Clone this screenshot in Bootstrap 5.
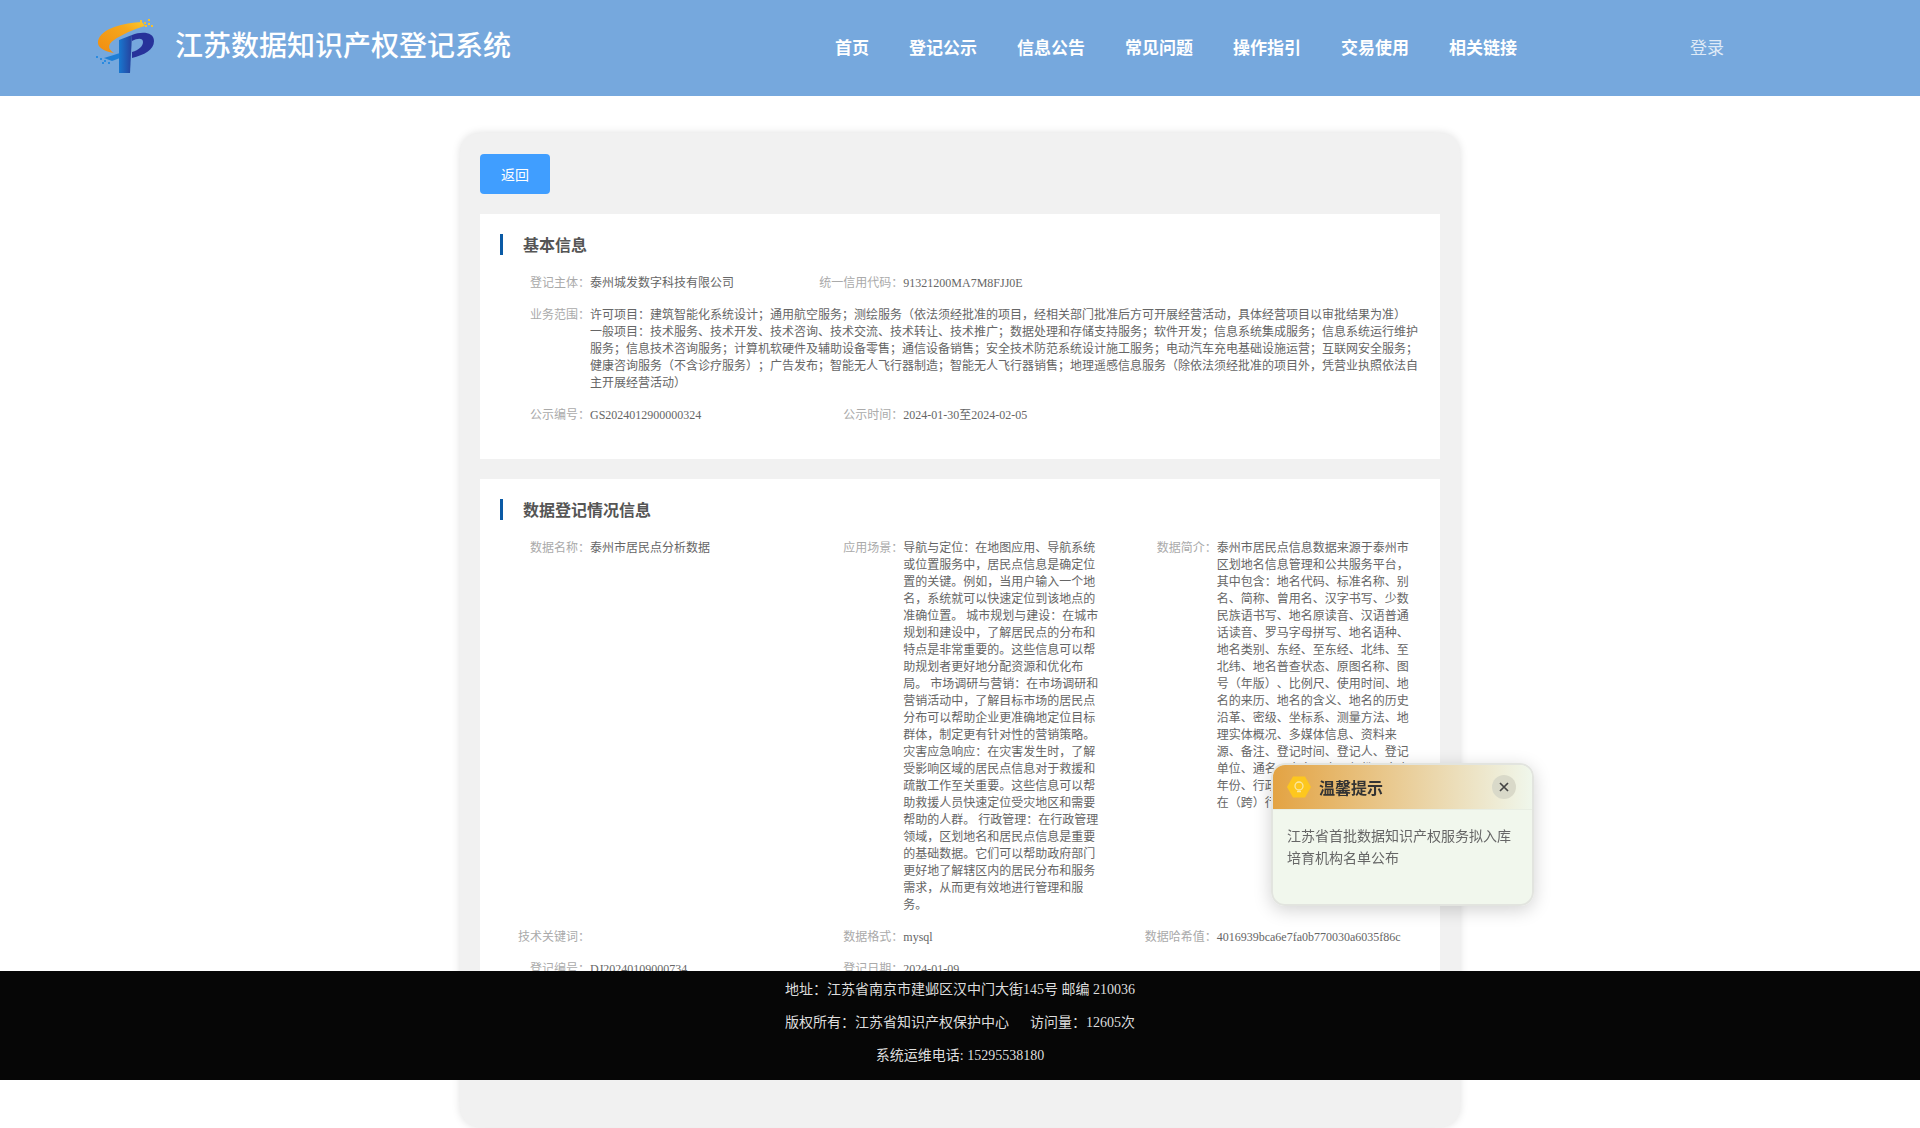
<!DOCTYPE html>
<html lang="zh-CN">
<head>
  <meta charset="UTF-8">
  <title>江苏数据知识产权登记系统</title>
  <link href="https://cdn.jsdelivr.net/npm/bootstrap@5.3.3/dist/css/bootstrap.min.css" rel="stylesheet">
  <style>
    html, body { height: 100%; overflow: hidden; }
    body { background: #fff; font-family: "Liberation Serif", "Noto Sans CJK JP", serif; font-size: 12px; line-height: 17px; color: #666; text-spacing-trim: space-all; }
    .top-bar { height: 96px; background: #76a8dd; color: #fff; font-family: "Noto Sans CJK SC", sans-serif; }
    .brand-box { width: 745px; margin-left: 90px; }
    .brand-logo { margin-bottom: 8px; }
    .brand-title { font-size: 28px; line-height: 40px; font-weight: 500; margin: 0 0 8px 9px; }
    .main-nav { gap: 40px; font-size: 17px; font-weight: 700; padding-bottom: 4px; }
    .main-nav a { color: #fff; text-decoration: none; }
    .login-link { margin-right: 196px; padding-bottom: 4px; font-size: 17px; color: #dfeaf7; text-decoration: none; }
    .detail-sheet { width: 1000px; height: 994px; margin: 37px auto 0; padding: 21px 20px; background: #f1f1f1; border-radius: 20px; box-shadow: 0 0 8px rgba(0,0,0,.13); overflow: hidden; }
    .back-btn { width: 70px; height: 40px; padding: 0; background: #409eff; border: 0; border-radius: 4px; color: #fff; font-size: 14px; margin-bottom: 20px; font-family: "Noto Sans CJK SC", sans-serif; }
    .info-panel { background: #fff; padding: 20px 20px 5px 0; margin-bottom: 20px; }
    .info-panel .kv-row:last-child { margin-bottom: 15px; padding-bottom: 15px; }
    .panel-head { margin: 0 0 20px 20px; padding-left: 20px; border-left: 3px solid #0a5aa5; font-size: 16px; line-height: 21px; font-weight: 700; color: #555; font-family: "Noto Sans CJK SC", sans-serif; }
    .kv-row { margin-bottom: 15px; }
    .kv-label { width: 110px; flex-shrink: 0; text-align: right; color: #aaa; }
    .kv-text { min-width: 0; word-break: break-all; }
    .data-col .kv-text { padding-right: 4px; }
    .site-foot { position: fixed; left: 0; right: 0; bottom: 48px; height: 109px; background: #060606; color: #ddd; font-size: 14px; line-height: 33px; padding-top: 2px; text-align: center; }
    .tip-box { position: fixed; left: 1271px; top: 763px; width: 263px; height: 143px; border: 2px solid #e2e4df; border-radius: 14px; background: rgba(240,247,236,.96); box-shadow: 0 4px 18px rgba(0,0,0,.18); overflow: hidden; font-family: "Noto Sans CJK SC", sans-serif; }
    .tip-head { height: 45px; padding: 0 16px 0 14px; background: linear-gradient(90deg, rgba(227,160,60,.96), rgba(240,247,236,.96)); border-bottom: 1px solid #e8eee3; }
    .tip-title { margin-left: 8px; font-size: 16px; font-weight: 700; color: #333; }
    .tip-close { width: 24px; height: 24px; margin-left: auto; padding: 0; border: 0; border-radius: 50%; background: #d9d9c9; }
    .tip-body { padding: 14px 14px; font-size: 14px; line-height: 22px; color: #666; }
  </style>
</head>
<body>
  <header class="top-bar d-flex align-items-center">
    <div class="brand-box d-flex align-items-center">
      <svg width="76" height="60" viewBox="0 0 76 60" class="brand-logo flex-shrink-0">
        <defs>
          <linearGradient id="swoosh" x1="0" y1="1" x2="1" y2="0">
            <stop offset="0" stop-color="#f08c10"/>
            <stop offset=".7" stop-color="#f6a81c"/>
            <stop offset="1" stop-color="#fbc92c"/>
          </linearGradient>
          <linearGradient id="stem" x1="0" y1="0" x2="1" y2="0">
            <stop offset="0" stop-color="#1878d0"/>
            <stop offset="1" stop-color="#27409c"/>
          </linearGradient>
        </defs>
        <path d="M52 8C34 9 11 14 8 27C7 33 13 37 24 39C18 35 17 31 24 26C31 21 44 15 55 12Z" fill="url(#swoosh)"/>
        <path d="M14 44L30 39L30 44L22 47Z" fill="#1f7fd6"/>
        <path d="M29 26L42 21L40 59L29 59Z" fill="url(#stem)"/>
        <path d="M42 21C52 17 64 18 64 27C64 36 54 41 42 44L42 38C49 36 53 32 53 28C53 24 48 24 42 27Z" fill="#27329a"/>
        <g fill="#f5c030">
          <rect x="50" y="6" width="2" height="2"/><rect x="54" y="8" width="2" height="2"/><rect x="58" y="9" width="2" height="2"/><rect x="55" y="11" width="2" height="2"/><rect x="61" y="11" width="2" height="2"/><rect x="58" y="5" width="2" height="2"/>
        </g>
        <g fill="#2b8be0">
          <rect x="6" y="42" width="2" height="2"/><rect x="10" y="44" width="2" height="2"/><rect x="14" y="46" width="2" height="2"/><rect x="18" y="48" width="2" height="2"/><rect x="12" y="48" width="2" height="2"/>
        </g>
      </svg>
      <div class="brand-title text-nowrap">江苏数据知识产权登记系统</div>
    </div>
    <nav class="main-nav d-flex">
      <a href="#">首页</a>
      <a href="#">登记公示</a>
      <a href="#">信息公告</a>
      <a href="#">常见问题</a>
      <a href="#">操作指引</a>
      <a href="#">交易使用</a>
      <a href="#">相关链接</a>
    </nav>
    <a href="#" class="login-link ms-auto">登录</a>
  </header>

  <main class="detail-sheet">
    <button type="button" class="btn back-btn d-block">返回</button>

    <section class="info-panel">
      <h2 class="panel-head">基本信息</h2>
      <div class="row g-0 kv-row">
        <div class="col-4 d-flex"><div class="kv-label">登记主体：</div><div class="kv-text">泰州城发数字科技有限公司</div></div>
        <div class="col-4 d-flex"><div class="kv-label">统一信用代码：</div><div class="kv-text">91321200MA7M8FJJ0E</div></div>
      </div>
      <div class="d-flex kv-row">
        <div class="kv-label">业务范围：</div>
        <div class="kv-text">许可项目：建筑智能化系统设计；通用航空服务；测绘服务（依法须经批准的项目，经相关部门批准后方可开展经营活动，具体经营项目以审批结果为准）<br>一般项目：技术服务、技术开发、技术咨询、技术交流、技术转让、技术推广；数据处理和存储支持服务；软件开发；信息系统集成服务；信息系统运行维护服务；信息技术咨询服务；计算机软硬件及辅助设备零售；通信设备销售；安全技术防范系统设计施工服务；电动汽车充电基础设施运营；互联网安全服务；健康咨询服务（不含诊疗服务）；广告发布；智能无人飞行器制造；智能无人飞行器销售；地理遥感信息服务（除依法须经批准的项目外，凭营业执照依法自主开展经营活动）</div>
      </div>
      <div class="row g-0 kv-row">
        <div class="col-4 d-flex"><div class="kv-label">公示编号：</div><div class="kv-text">GS2024012900000324</div></div>
        <div class="col-4 d-flex"><div class="kv-label">公示时间：</div><div class="kv-text">2024-01-30至2024-02-05</div></div>
      </div>
    </section>

    <section class="info-panel">
      <h2 class="panel-head">数据登记情况信息</h2>
      <div class="row g-0 kv-row">
        <div class="col-4 d-flex data-col"><div class="kv-label">数据名称：</div><div class="kv-text">泰州市居民点分析数据</div></div>
        <div class="col-4 d-flex data-col"><div class="kv-label">应用场景：</div><div class="kv-text">导航与定位：在地图应用、导航系统或位置服务中，居民点信息是确定位置的关键。例如，当用户输入一个地名，系统就可以快速定位到该地点的准确位置。 城市规划与建设：在城市规划和建设中，了解居民点的分布和特点是非常重要的。这些信息可以帮助规划者更好地分配资源和优化布局。 市场调研与营销：在市场调研和营销活动中，了解目标市场的居民点分布可以帮助企业更准确地定位目标群体，制定更有针对性的营销策略。 灾害应急响应：在灾害发生时，了解受影响区域的居民点信息对于救援和疏散工作至关重要。这些信息可以帮助救援人员快速定位受灾地区和需要帮助的人群。 行政管理：在行政管理领域，区划地名和居民点信息是重要的基础数据。它们可以帮助政府部门更好地了解辖区内的居民分布和服务需求，从而更有效地进行管理和服务。</div></div>
        <div class="col-4 d-flex data-col"><div class="kv-label">数据简介：</div><div class="kv-text">泰州市居民点信息数据来源于泰州市区划地名信息管理和公共服务平台，其中包含：地名代码、标准名称、别名、简称、曾用名、汉字书写、少数民族语书写、地名原读音、汉语普通话读音、罗马字母拼写、地名语种、地名类别、东经、至东经、北纬、至北纬、地名普查状态、原图名称、图号（年版）、比例尺、使用时间、地名的来历、地名的含义、地名的历史沿革、密级、坐标系、测量方法、地理实体概况、多媒体信息、资料来源、备注、登记时间、登记人、登记单位、通名、专名、启用年份、废止年份、行政区划代码、邮政编码、所在（跨）行政区、其他信息等信息。</div></div>
      </div>
      <div class="row g-0 kv-row">
        <div class="col-4 d-flex"><div class="kv-label">技术关键词：</div><div class="kv-text"></div></div>
        <div class="col-4 d-flex"><div class="kv-label">数据格式：</div><div class="kv-text">mysql</div></div>
        <div class="col-4 d-flex"><div class="kv-label">数据哈希值：</div><div class="kv-text">4016939bca6e7fa0b770030a6035f86c</div></div>
      </div>
      <div class="row g-0 kv-row">
        <div class="col-4 d-flex"><div class="kv-label">登记编号：</div><div class="kv-text">DJ20240109000734</div></div>
        <div class="col-4 d-flex"><div class="kv-label">登记日期：</div><div class="kv-text">2024-01-09</div></div>
      </div>
    </section>
  </main>

  <footer class="site-foot">
    <div>地址：江苏省南京市建邺区汉中门大街145号 邮编 210036</div>
    <div>版权所有：江苏省知识产权保护中心 &nbsp;&nbsp;&nbsp;&nbsp; 访问量：12605次</div>
    <div>系统运维电话: 15295538180</div>
  </footer>

  <aside class="tip-box">
    <div class="tip-head d-flex align-items-center">
      <svg width="24" height="24" viewBox="0 0 24 24" class="flex-shrink-0">
        <polygon points="6,1.5 18,1.5 24,12 18,22.5 6,22.5 0,12" fill="#fdc71e"/>
        <circle cx="12" cy="11" r="4" fill="none" stroke="#fbe7a0" stroke-width="1.3"/>
        <path d="M10 16.5h4" stroke="#fbe7a0" stroke-width="1.3"/>
      </svg>
      <span class="tip-title">温馨提示</span>
      <button type="button" class="tip-close d-flex align-items-center justify-content-center" aria-label="关闭">
        <svg width="10" height="10" viewBox="0 0 10 10"><path d="M1 1L9 9M9 1L1 9" stroke="#444" stroke-width="1.7"/></svg>
      </button>
    </div>
    <div class="tip-body">江苏省首批数据知识产权服务拟入库培育机构名单公布</div>
  </aside>
  <script src="https://cdn.jsdelivr.net/npm/bootstrap@5.3.3/dist/js/bootstrap.bundle.min.js"></script>
</body>
</html>
